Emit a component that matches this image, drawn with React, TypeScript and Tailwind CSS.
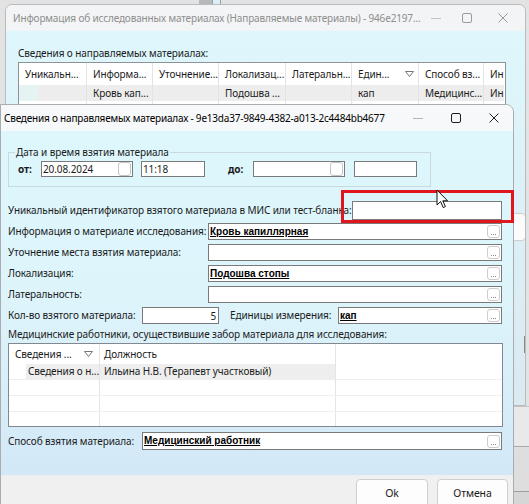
import React from 'react';

const FONT = "font-['Noto_Sans',sans-serif]";
const BOLD = "font-['Liberation_Sans',Arial,sans-serif] font-bold underline tracking-normal";

// small "..." picker button inside a field
const Dots: React.FC = () => (
  <span className="ml-auto mr-[1px] flex h-[13px] w-[13px] shrink-0 items-end justify-center rounded-[3px] border border-[#cdcdcd] bg-white pb-[2px]">
    <span className="flex gap-[1px]">
      <i className="block h-[1px] w-[1px] bg-[#8a8a8a]" />
      <i className="block h-[1px] w-[1px] bg-[#8a8a8a]" />
      <i className="block h-[1px] w-[1px] bg-[#8a8a8a]" />
    </span>
  </span>
);

const Field: React.FC<{ value?: string; className?: string; dots?: boolean; right?: boolean }> = ({
  value,
  className = '',
  dots = true,
  right = false,
}) => (
  <div className={`flex h-[17px] items-center border border-[#7a7a7a] bg-white ${className}`}>
    {value && !right && <span className={`pl-[1px] text-[10px] leading-none text-black ${BOLD}`}>{value}</span>}
    {value && right && <span className="ml-auto pr-[2px] leading-none">{value}</span>}
    {dots && <Dots />}
  </div>
);

const DateBox: React.FC<{ value?: string; className?: string }> = ({ value, className = '' }) => (
  <div className={`flex h-[16px] items-center border border-[#7a7a7a] bg-white ${className}`}>
    <span className="pl-[1px] leading-none">{value}</span>
    <span className="ml-auto mr-[1px] h-[14px] w-[13px] rounded-[3px] border border-[#c4c4c4] bg-white" />
  </div>
);

const Row: React.FC<{ label: string; children: React.ReactNode; h?: string }> = ({ label, children, h = 'h-[21px]' }) => (
  <div className={`flex items-start ${h}`}>
    <div className="flex h-[17px] w-[200px] shrink-0 items-center whitespace-nowrap">{label}</div>
    {children}
  </div>
);

const WinControls: React.FC = () => (
  <div className="ml-auto flex h-full shrink-0 items-center">
    <div className="flex w-[38px] justify-center">
      <svg width="10" height="10" viewBox="0 0 10 10">
        <path d="M0 5.5H10" stroke="#b5b5b5" strokeWidth="1" />
      </svg>
    </div>
    <div className="flex w-[38px] justify-center">
      <svg width="10" height="10" viewBox="0 0 10 10">
        <rect x="0.5" y="0.5" width="9" height="9" rx="1.5" fill="none" stroke="#1f1f1f" strokeWidth="1" />
      </svg>
    </div>
    <div className="flex w-[38px] justify-center">
      <svg width="10" height="10" viewBox="0 0 10 10">
        <path d="M0.5 0.5L9.5 9.5M9.5 0.5L0.5 9.5" stroke="#1f1f1f" strokeWidth="1" />
      </svg>
    </div>
  </div>
);

const bgCols = [
  { w: 'w-[68px]', h: 'Уникальн...', v: '' },
  { w: 'w-[66px]', h: 'Информа...', v: 'Кровь кап...' },
  { w: 'w-[66px]', h: 'Уточнение...', v: '' },
  { w: 'w-[67px]', h: 'Локализац...', v: 'Подошва ...' },
  { w: 'w-[66px]', h: 'Латеральн...', v: '' },
  { w: 'w-[67px]', h: 'Един...', v: 'кап', sort: true },
  { w: 'w-[65px]', h: 'Способ вз...', v: 'Медицинс...' },
  { w: 'w-[20px]', h: 'Ин', v: 'Ин' },
];

const BackWindow: React.FC = () => (
  <div className="absolute left-[5px] top-[4px] flex h-[402px] w-[521px] flex-col overflow-hidden rounded-t-[7px] border border-[#b9bcbe]">
    <div className="flex h-[26px] shrink-0 items-center bg-[#f2f4f5] pl-[7px] tracking-[-0.15px] text-[#8e8e8e]">
      <span className="whitespace-nowrap">Информация об исследованных материалах (Направляемые материалы) - 946e2197...</span>
      <div className="ml-auto flex h-full items-center pr-[4px]">
        <div className="flex w-[30px] justify-center">
          <svg width="10" height="10" viewBox="0 0 10 10"><path d="M0 5.5H10" stroke="#c4c4c4" /></svg>
        </div>
        <div className="flex w-[33px] justify-center">
          <svg width="10" height="10" viewBox="0 0 10 10"><rect x="0.5" y="0.5" width="9" height="9" rx="1.5" fill="none" stroke="#9a9a9a" /></svg>
        </div>
        <div className="flex w-[38px] justify-center">
          <svg width="10" height="10" viewBox="0 0 10 10"><path d="M0.5 0.5L9.5 9.5M9.5 0.5L0.5 9.5" stroke="#9a9a9a" /></svg>
        </div>
      </div>
    </div>
    <div className="relative flex-1 bg-linear-to-b from-[#def7fc] to-[#dbe9f1] pl-[12px]">
      <div className="mt-[15px] h-[15px] leading-[15px]">Сведения о направляемых материалах:</div>
      <div className="mt-[1px] w-[488px] border border-[#8f9396] bg-white">
        <div className="flex h-[22px]">
          {bgCols.map((c, i) => (
            <div key={i} className={`flex ${c.w} shrink-0 items-center overflow-hidden whitespace-nowrap border-r border-[#e3e3e3] pl-[6px] pr-[4px] last:border-r-0`}>
              <span>{c.h}</span>
              {c.sort && (
                <svg className="ml-auto" width="9" height="6" viewBox="0 0 9 6">
                  <path d="M0.5 0.5H8.5L4.5 5.5Z" fill="none" stroke="#666" strokeWidth="0.9" />
                </svg>
              )}
            </div>
          ))}
        </div>
        <div className="flex h-[16px]">
          {bgCols.map((c, i) => (
            <div key={i} className={`relative flex ${c.w} shrink-0 items-center overflow-hidden whitespace-nowrap border-r border-[#e3e3e3] bg-[#ededed] pl-[6px] last:border-r-0`}>
              {i === 0 && <span className="absolute inset-y-0 left-0 w-[19px] bg-[#e6f3f3]" />}
              <span className="relative">{c.v}</span>
            </div>
          ))}
        </div>
        <div className="flex h-[40px]">
          {bgCols.map((c, i) => (
            <div key={i} className={`${c.w} shrink-0 border-r border-[#e3e3e3] last:border-r-0`} />
          ))}
        </div>
      </div>
      {/* button peeking out at right */}
      <div className="absolute left-[504px] top-[182px] h-[28px] w-[16px] rounded-[4px] border border-[#cfcfcf] bg-[#fbfbfb]" />
      <div className="absolute left-[518px] top-[305px] h-[17px] w-[10px] border border-[#8a8a8a] bg-white" />
    </div>
  </div>
);

const Dialog: React.FC = () => (
  <div className="absolute left-0 top-[104px] flex h-[410px] w-[514px] flex-col overflow-hidden rounded-tr-[8px] border border-[#a9adb0] bg-[#f0f0f0] text-[#1b1b1b]">
    <div className="flex h-[26px] shrink-0 items-center bg-[#f7f8f9] pl-[3px] tracking-[-0.2px] text-black">
      <span className="whitespace-nowrap">Сведения о направляемых материалах - 9e13da37-9849-4382-a013-2c4484bb4677</span>
      <WinControls />
    </div>
    <div className="flex h-[344px] shrink-0 flex-col bg-linear-to-b from-[#ddf7fc] via-[#ddf4fb] to-[#d3e8f7] pl-[7px] pr-[11px]">
      <fieldset className="mt-[14px] w-[423px] border border-[#c9d9de] px-[6px] pb-[9px]">
        <legend className="px-[1px] leading-[14px]">Дата и время взятия материала</legend>
        <div className="mt-[2px] flex items-center">
          <span className="ml-[3px] w-[23px] font-bold">от:</span>
          <DateBox value="20.08.2024" className="w-[92px]" />
          <div className="ml-[8px] flex h-[16px] w-[64px] items-center border border-[#7a7a7a] bg-white pl-[1px] leading-none">11:18</div>
          <span className="ml-[23px] w-[25px] font-bold">до:</span>
          <DateBox className="w-[92px]" />
          <div className="ml-[9px] h-[16px] w-[63px] border border-[#7a7a7a] bg-white" />
        </div>
      </fieldset>

      <div className="mt-[14px] flex flex-col">
        <div className="flex h-[22px] items-start">
          <div className="flex h-[19px] w-[344px] shrink-0 items-center overflow-hidden whitespace-nowrap">Уникальный идентификатор взятого материала в МИС или тест-бланка:</div>
          <div className="h-[19px] flex-1 border border-[#7a7a7a] bg-white" />
        </div>
        <Row label="Информация о материале исследования:">
          <Field value="Кровь капиллярная" className="flex-1" />
        </Row>
        <Row label="Уточнение места взятия материала:">
          <Field className="flex-1" />
        </Row>
        <Row label="Локализация:">
          <Field value="Подошва стопы" className="flex-1" />
        </Row>
        <Row label="Латеральность:">
          <Field className="flex-1" />
        </Row>
        <div className="flex h-[18px] items-start">
          <div className="flex h-[17px] w-[134px] shrink-0 items-center whitespace-nowrap">Кол-во взятого материала:</div>
          <Field value="5" right dots={false} className="w-[77px]" />
          <div className="ml-[11px] flex h-[17px] w-[108px] shrink-0 items-center whitespace-nowrap">Единицы измерения:</div>
          <Field value="кап" className="flex-1" />
        </div>
        <div className="flex h-[18px] items-center whitespace-nowrap">Медицинские работники, осуществившие забор материала для исследования:</div>

        <div className="w-[495px] border border-[#828790] bg-white">
          <div className="flex h-[20px]">
            <div className="flex w-[91px] shrink-0 items-center border-r border-[#e4e4e4] pl-[6px] pr-[6px]">
              <span>Сведения ...</span>
              <svg className="ml-auto" width="9" height="6" viewBox="0 0 9 6">
                <path d="M0.5 0.5H8.5L4.5 5.5Z" fill="none" stroke="#666" strokeWidth="0.9" />
              </svg>
            </div>
            <div className="flex w-[236px] shrink-0 items-center border-r border-[#e4e4e4] pl-[4px]">Должность</div>
            <div className="flex-1" />
          </div>
          <div className="flex h-[16px] border-b border-[#efefef]">
            <div className="flex w-[91px] shrink-0 items-center border-r border-[#e4e4e4]">
              <span className="h-full w-[17px] bg-white" />
              <span className="flex h-full flex-1 items-center overflow-hidden whitespace-nowrap bg-[#eeeeee] pl-[2px]">Сведения о н...</span>
            </div>
            <div className="flex w-[236px] shrink-0 items-center overflow-hidden whitespace-nowrap border-r border-[#e4e4e4] bg-[#eeeeee] pl-[4px]">Ильина Н.В. (Терапевт участковый)</div>
            <div className="flex-1" />
          </div>
          {[0, 1, 2].map((r) => (
            <div key={r} className={`flex ${r === 2 ? 'h-[14px]' : 'h-[16px] border-b border-[#efefef]'}`}>
              <div className="w-[91px] shrink-0 border-r border-[#e4e4e4]" />
              <div className="w-[236px] shrink-0 border-r border-[#e4e4e4]" />
              <div className="flex-1" />
            </div>
          ))}
        </div>

        <div className="mt-[5px] flex items-start">
          <div className="flex h-[18px] w-[134px] shrink-0 items-center whitespace-nowrap">Способ взятия материала:</div>
          <Field value="Медицинский работник" className="h-[18px] flex-1" />
        </div>
      </div>
    </div>
    <div className="flex flex-1 items-start justify-end gap-[9px] pr-[5px] pt-[4px] text-[10.5px]">
      <button className="h-[30px] w-[72px] rounded-[4px] border border-[#cfcfcf] bg-[#fdfdfd]">Ok</button>
      <button className="h-[30px] w-[71px] rounded-[4px] border border-[#cfcfcf] bg-[#fdfdfd]">Отмена</button>
    </div>
  </div>
);

export default function App() {
  return (
    <div className={`relative h-[504px] w-[529px] overflow-hidden bg-[#e3e3e3] ${FONT} text-[10px] tracking-[-0.1px] text-[#1b1b1b]`}>
      {/* desktop bits peeking above the back window */}
      <div className="absolute left-[199px] top-0 h-[5px] w-[13px] bg-[#b9b9b9]" />
      <div className="absolute left-[212px] top-0 h-[5px] w-[9px] border-x border-[#9aa3a8] bg-[#dbeff5]" />
      {/* lower right, under the back window */}
      <div className="absolute left-[513px] top-[406px] h-[40px] w-[16px] border-t border-[#c4c4c4] bg-[#e9e9e9]" />
      <div className="absolute left-[513px] top-[446px] h-[45px] w-[16px] border-t border-[#a8a8a8] bg-[#dedede]" />
      <div className="absolute left-[513px] top-[491px] h-[13px] w-[16px] border-t border-[#9c9c9c] bg-[#d6d6d6]" />

      <BackWindow />
      <Dialog />

      {/* highlight frame drawn over the screenshot */}
      <div className="absolute left-[341px] top-[190px] h-[33px] w-[173px] border-[3px] border-[#e1161d]" />
      {/* mouse pointer */}
      <svg className="absolute left-[436px] top-[189px]" width="13" height="20" viewBox="0 0 13 20">
        <path d="M1 1V16L4.6 12.6L7.2 18.6L9.4 17.6L6.8 11.8H11.6Z" fill="#fff" stroke="#111" strokeWidth="1" strokeLinejoin="round" />
      </svg>
    </div>
  );
}
